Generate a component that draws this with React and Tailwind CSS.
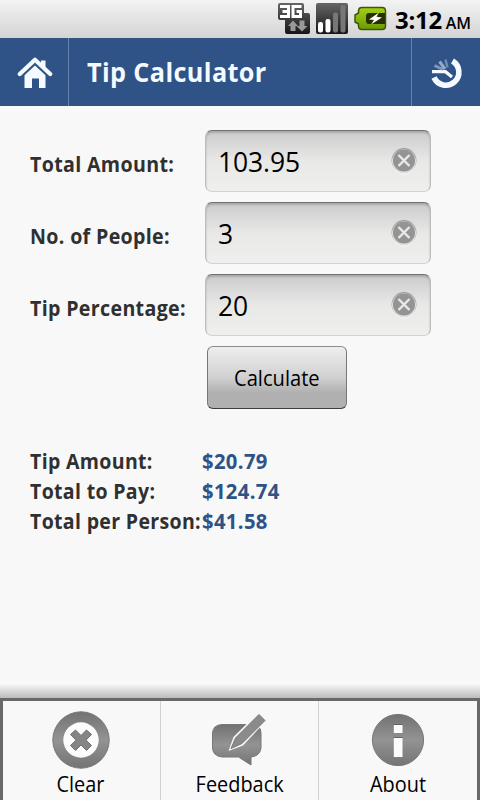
import React, { useState } from 'react';

const HomeIcon = () => (
    <svg width="36" height="34" viewBox="0 0 36 34" fill="#f4faff">
        <path d="M7.500 19 18 8.500 28.500 19V32H22V22.500H15V32H7.500Z" />
        <path d="M2.800 19.800 18 5.800 33.200 19.800" fill="none" stroke="#2f5287" strokeWidth="5.500" />
        <path d="M2.800 18 18 3.800 33.200 18" fill="none" stroke="#f4faff" strokeWidth="4.200" strokeLinecap="round" strokeLinejoin="round" />
        <path d="M24 4.500H28.500V13L24 9Z" />
    </svg>
);

const LogoIcon = () => (
    <svg width="36" height="36" viewBox="0 0 36 36" fill="none">
        <path d="M24.500 7A13 13 0 1 1 6 23.500" stroke="#f4faff" strokeWidth="5.600" />
        <path d="M4 17.700H17.500L24 23" stroke="#f4faff" strokeWidth="3.200" />
        <path d="M6.500 11.500 15 15.500" stroke="#7e98bd" strokeWidth="3" />
        <path d="M11.500 7.500 17 15" stroke="#94aaca" strokeWidth="3" />
        <path d="M17.500 5.500 19.500 13.500" stroke="#6f8cb5" strokeWidth="2.500" />
    </svg>
);

const StatusIcons = () => (
    <svg width="112" height="36" viewBox="0 0 112 36">
        <defs>
            <linearGradient id="dark" x1="0" y1="0" x2="0" y2="1">
                <stop offset="0" stopColor="#666" />
                <stop offset="1" stopColor="#161616" />
            </linearGradient>
            <linearGradient id="green" x1="0" y1="0" x2="0" y2="1">
                <stop offset="0" stopColor="#a3d014" />
                <stop offset="1" stopColor="#6c9a05" />
            </linearGradient>
        </defs>
        <path d="M2 3H24Q26 3 26 5V13H30Q32 13 32 15V32Q32 34 30 34H9Q7 34 7 32V20H2Q0 20 0 18V5Q0 3 2 3Z" fill="url(#dark)" />
        <path d="M2 6.500H10.500V16.500H2M4.500 11.500H10.500M23.500 6.500H15V16.500H22.500V11.500H18.500" fill="none" stroke="#fff" strokeWidth="3" />
        <path d="M15 20.500 20 26H17.500V31H12.500V26H10ZM21.500 20.500H26.500V26H29.500L24 31.500 18.500 26H21.500Z" fill="#999" />
        <rect x="38" y="3" width="32" height="31" rx="2" fill="url(#dark)" />
        <rect x="40" y="22" width="5" height="10.500" rx="2" fill="#fff" />
        <rect x="47.500" y="19" width="5" height="13.500" rx="2" fill="#fff" />
        <rect x="55" y="12.500" width="5" height="20" rx="2" fill="#777" />
        <rect x="62.500" y="5" width="5" height="27.500" rx="2" fill="#777" />
        <path d="M84 7.500H104Q107.500 7.500 107.500 11V26Q107.500 29.500 104 29.500H84Q80.500 29.500 80.500 26V24L77 22V15L80.500 13V11Q80.500 7.500 84 7.500Z" fill="url(#green)" stroke="#3d570a" strokeWidth="1.500" />
        <path d="M91 13H107V24H91Q88 24 88 21V16Q88 13 91 13Z" fill="#263000" />
        <path d="M101 12.500 91 19.500 96 20 93 24.500 104 17.500 98.500 16.800Z" fill="#fff" />
    </svg>
);

const ClearFieldIcon = () => (
    <svg width="28" height="28" viewBox="0 0 28 28">
        <circle cx="14" cy="14.500" r="13" fill="#f3f4f2" />
        <circle cx="14" cy="13.500" r="12.500" fill="#999" />
        <circle cx="14" cy="14.200" r="12" fill="#dedfdd" />
        <circle cx="14" cy="13.500" r="11" fill="#949494" />
        <path d="M8.500 8 19.500 19M19.500 8 8.500 19" stroke="#e9e9e9" strokeWidth="2.400" />
    </svg>
);

const GrayDefs = () => (
    <svg width="0" height="0" className="absolute">
        <defs>
            <linearGradient id="gray" x1="0" y1="0" x2="0" y2="1">
                <stop offset="0" stopColor="#727272" />
                <stop offset="0.500" stopColor="#939393" />
                <stop offset="1" stopColor="#747474" />
            </linearGradient>
        </defs>
    </svg>
);

const ClearIcon = () => (
    <svg width="60" height="60" viewBox="0 0 60 60">
        <circle cx="30" cy="30" r="28.200" fill="url(#gray)" stroke="#777" />
        <circle cx="30" cy="30" r="17.700" fill="#fcfcfc" />
        <path d="M24.500 20 30 25.500 35.500 20 40.500 24.500 35 30.200 40.500 35.500 35.500 40.500 30 35 24.500 40.500 19.500 35.500 25 30.200 19.500 24.500Z" fill="#858585" stroke="#707070" strokeLinejoin="round" />
    </svg>
);

const FeedbackIcon = () => (
    <svg width="60" height="60" viewBox="0 0 60 60">
        <path d="M12 14.500H42Q51 15 51 23V38Q50 46 41 47V55L28.500 47H12Q3 46 2.500 38V23Q3 15 12 14.500Z" fill="url(#gray)" stroke="#777" strokeLinejoin="round" />
        <path d="M18.500 41 23.500 27 47 3.500 56 11 33 35.500Z" fill="#f7f7f7" />
        <path d="M21 38.500 25.500 28 49 4.500 55 10.500 32 33.500Z" fill="#8b8b8b" stroke="#777" />
    </svg>
);

const AboutIcon = () => (
    <svg width="60" height="60" viewBox="0 0 60 60">
        <circle cx="30" cy="30" r="25.600" fill="url(#gray)" stroke="#777" />
        <path d="M25.800 15H34.500V23H25.800Z" fill="#fcfcfc" />
        <path d="M25.800 28H34.500V47H25.800Z" fill="#fcfcfc" />
        <path d="M25.500 14.500H34.500M25.500 27.500H34.500" stroke="#626262" />
    </svg>
);

const Field = ({ label, value, onChange }) => (
    <div className="flex h-[62px] items-center">
        <label className="w-[175px] shrink-0 pt-2 text-[21px] font-bold tracking-[0.35px] whitespace-nowrap text-[#303030]">
            <span className="inline-block origin-left scale-x-[0.935]">{label}</span>
        </label>
        <div className="flex h-[62px] w-[226px] items-center rounded-[7px] border border-x-[#bdbdbd] border-t-[#707070] border-b-[#d2d2d2] bg-linear-to-b from-[#cbcbcb] via-[#e8e9e7] via-50% to-[#eff0ee] px-3 shadow-[inset_0_2px_2px_#aaa]">
            <input
                className="w-0 flex-1 origin-left scale-x-[0.945] bg-transparent text-[28px] leading-9 tracking-[-0.1px] text-black outline-none"
                value={value}
                onChange={(e) => onChange(e.target.value)}
            />
            <button onClick={() => onChange('')} aria-label="Clear field">
                <ClearFieldIcon />
            </button>
        </div>
    </div>
);

const tabs = [
    { title: 'Clear', icon: ClearIcon, box: 'w-[157px] pr-0.5' },
    { title: 'Feedback', icon: FeedbackIcon, box: 'w-[158px] border-l border-[#d0d0d0]' },
    { title: 'About', icon: AboutIcon, box: 'w-[159px] border-l border-[#d0d0d0]' }
];

const App = () => {
    const [amount, setAmount] = useState('103.95');
    const [people, setPeople] = useState('3');
    const [percentage, setPercentage] = useState('20');
    const [results, setResults] = useState({ tip: 20.79, total: 124.74, each: 41.58 });

    const calculate = () => {
        const tip = (Number(amount) * Number(percentage)) / 100;
        const total = Number(amount) + tip;
        setResults({ tip, total, each: total / (Number(people) || 1) });
    };

    const clearAll = () => {
        setAmount('');
        setPeople('');
        setPercentage('');
        setResults({ tip: 0, total: 0, each: 0 });
    };

    const rows = [
        { label: 'Tip Amount:', value: results.tip },
        { label: 'Total to Pay:', value: results.total },
        { label: 'Total per Person:', value: results.each }
    ];

    return (
        <div className="flex h-[800px] w-[480px] flex-col overflow-hidden bg-[#f8f8f8] font-['Open_Sans','Noto_Sans',sans-serif]">
            <GrayDefs />

            {/* Status bar */}
            <div className="flex h-[38px] shrink-0 items-start justify-end bg-linear-to-b from-[#f3f3f3] to-[#d4d4d4] pr-[9px]">
                <StatusIcons />
                <div className="ml-[5px] flex w-[76px] items-baseline justify-between font-semibold text-black">
                    <span className="text-2xl leading-[39px] font-bold tracking-[-0.3px]">3:12</span>
                    <span className="text-base">AM</span>
                </div>
            </div>

            {/* Header */}
            <header className="flex h-[68px] shrink-0 items-stretch bg-[#2f5287] text-[#f4faff]">
                <button className="flex w-[69px] items-center justify-center border-r border-[#6582ab] pt-0.5 pl-0.5" aria-label="Home">
                    <HomeIcon />
                </button>
                <h1 className="flex-1 pl-[18px] text-[27px] leading-[68px] font-bold tracking-[0.4px]">
                    <span className="inline-block origin-left scale-x-[0.935]">Tip Calculator</span>
                </h1>
                <button className="flex w-[69px] items-center justify-center border-l border-[#6582ab]" aria-label="Logo">
                    <LogoIcon />
                </button>
            </header>

            <main className="flex-1 pt-6 pl-[30px]">
                <div className="flex flex-col gap-2.5">
                    <Field label="Total Amount:" value={amount} onChange={setAmount} />
                    <Field label="No. of People:" value={people} onChange={setPeople} />
                    <Field label="Tip Percentage:" value={percentage} onChange={setPercentage} />
                </div>
                <button
                    onClick={calculate}
                    className="mt-2.5 ml-[177px] flex h-[63px] w-[140px] items-center justify-center rounded-md border border-x-[#777] border-t-[#8b8b8b] border-b-[#3c3c3c] bg-linear-to-b from-[#eeefed] via-[#d0d0d0] via-50% to-[#b0b0b0] to-75% text-[22px] text-black"
                >
                    <span className="scale-x-[0.915]">Calculate</span>
                </button>
                <div className="mt-[37px] text-[21px] leading-[30px] font-bold tracking-[0.35px]">
                    {rows.map((row) => (
                        <div className="flex" key={row.label}>
                            <div className="w-[172px] whitespace-nowrap text-[#303030]">
                                <span className="inline-block origin-left scale-x-[0.93]">{row.label}</span>
                            </div>
                            <span className="origin-left scale-x-[0.965] text-[#2f5287]">${row.value.toFixed(2)}</span>
                        </div>
                    ))}
                </div>
            </main>

            {/* Bottom menu */}
            <div className="h-[14px] shrink-0 bg-linear-to-b from-[#f8f8f8] to-[#bcbcbc]" />
            <nav className="flex h-[102px] shrink-0 border-x-[3px] border-t-[3px] border-[#696969]">
                {tabs.map((tab) => (
                    <button
                        key={tab.title}
                        onClick={tab.title === 'Clear' ? clearAll : undefined}
                        className={`flex flex-col items-center pt-[9px] text-[22px] leading-[26px] text-black ${tab.box}`}
                    >
                        <tab.icon />
                        <span className="scale-x-[0.905]">{tab.title}</span>
                    </button>
                ))}
            </nav>
        </div>
    );
};

export default App;
